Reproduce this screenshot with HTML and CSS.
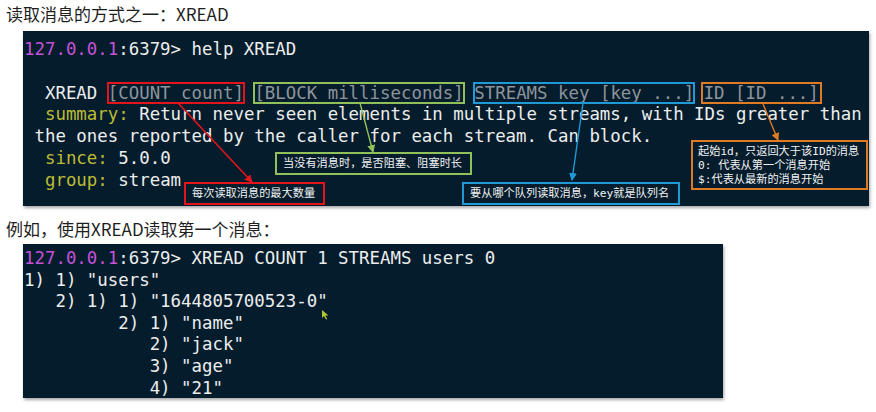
FILE: index.html
```html
<!DOCTYPE html>
<html>
<head>
<meta charset="utf-8">
<link rel="stylesheet" href="styles.css">
</head>
<body>
<h2 class="title">读取消息的方式之一：XREAD</h2>
<div class="term term-help">
  <div class="line"><span class="ip">127.0.0.1</span>:6379&gt; help XREAD</div>
  <div class="line"> </div>
  <div class="line">  XREAD <span class="arg box-red">[COUNT count]</span> <span class="arg box-green">[BLOCK milliseconds]</span> <span class="arg box-blue">STREAMS key [key ...]</span> <span class="arg box-orange">ID [ID ...]</span></div>
  <div class="line">  <span class="key">summary:</span> Return never seen elements in multiple streams, with IDs greater than</div>
  <div class="line"> the ones reported by the caller for each stream. Can block.</div>
  <div class="line">  <span class="key">since:</span> 5.0.0</div>
  <div class="line">  <span class="key">group:</span> stream</div>

  <svg class="arrows" width="846" height="175" viewBox="0 0 846 175">
    <defs>
      <marker id="hr" markerWidth="8" markerHeight="8" refX="7" refY="4" orient="auto" markerUnits="userSpaceOnUse"><path d="M0,0 L8,4 L0,8 z" fill="#e3141c"/></marker>
      <marker id="hg" markerWidth="8" markerHeight="8" refX="7" refY="4" orient="auto" markerUnits="userSpaceOnUse"><path d="M0,0 L8,4 L0,8 z" fill="#8fc05a"/></marker>
      <marker id="hb" markerWidth="8" markerHeight="8" refX="7" refY="4" orient="auto" markerUnits="userSpaceOnUse"><path d="M0,0 L8,4 L0,8 z" fill="#1f9ad6"/></marker>
      <marker id="ho" markerWidth="8" markerHeight="8" refX="7" refY="4" orient="auto" markerUnits="userSpaceOnUse"><path d="M0,0 L8,4 L0,8 z" fill="#e07b25"/></marker>
    </defs>
    <line x1="155" y1="72" x2="229" y2="151" stroke="#e3141c" stroke-width="1.6" marker-end="url(#hr)"/>
    <line x1="337" y1="72" x2="350" y2="121" stroke="#8fc05a" stroke-width="1.4" marker-end="url(#hg)"/>
    <line x1="560" y1="72" x2="549" y2="149" stroke="#1f9ad6" stroke-width="1.4" marker-end="url(#hb)"/>
    <line x1="740" y1="73" x2="755" y2="109" stroke="#e07b25" stroke-width="1.4" marker-end="url(#ho)"/>
  </svg>

  <div class="note note-red">每次读取消息的最大数量</div>
  <div class="note note-green">当没有消息时，是否阻塞、阻塞时长</div>
  <div class="note note-blue">要从哪个队列读取消息，key就是队列名</div>
  <div class="note note-orange">起始id，只返回大于该ID的消息<br>0: 代表从第一个消息开始<br>$:代表从最新的消息开始</div>
</div>

<h2 class="title title-2">例如，使用XREAD读取第一个消息：</h2>
<div class="term term-out">
  <div class="line"><span class="ip">127.0.0.1</span>:6379&gt; XREAD COUNT 1 STREAMS users 0</div>
  <div class="line">1) 1) "users"</div>
  <div class="line">   2) 1) 1) "1644805700523-0"</div>
  <div class="line">         2) 1) "name"</div>
  <div class="line">            2) "jack"</div>
  <div class="line">            3) "age"</div>
  <div class="line">            4) "21"</div>
  <svg class="pointer" width="8" height="10" viewBox="0 0 8 10"><path d="M0,0 L0,8 L2,6 L4,9.5 L5.2,9 L3.4,5.6 L6.5,5.6 z" fill="#b4c832"/></svg>
</div>
</body>
</html>
```

FILE: styles.css
```css
html, body {
  margin: 0;
  padding: 0;
  background: #ffffff;
}

body {
  width: 876px;
  height: 412px;
  overflow: hidden;
  font-family: "Noto Sans CJK SC", "Noto Sans", sans-serif;
}

.title {
  margin: 2px 0 0 6px;
  font-size: 17px;
  font-weight: 400;
  line-height: 24px;
  color: #1e1e1e;
}

.title-2 {
  margin-top: 11px;
}

.term {
  position: relative;
  box-sizing: border-box;
  margin-left: 23px;
  background: #051c2c;
  color: #eceeee;
  font-family: "DejaVu Sans Mono", "Liberation Mono", monospace;
  font-size: 17.4px;
  box-shadow: 1px 2px 3px rgba(0, 0, 0, 0.35);
}

.term .line {
  white-space: pre;
}

.term-help {
  margin-top: 5px;
  width: 846px;
  height: 175px;
  padding: 8px 0 0 1px;
  line-height: 21.8px;
}

.term-out {
  margin-top: 3px;
  width: 700px;
  height: 154px;
  padding: 4px 0 0 1px;
  line-height: 21.6px;
}

.ip {
  color: #c452d8;
}

.key {
  color: #bcbc34;
}

.arg {
  color: #8e949b;
  outline-offset: -1px;
}

.box-red { outline: 2px solid #e3141c; }
.box-green { outline: 2px solid #8fc05a; }
.box-blue { outline: 2px solid #1f9ad6; }
.box-orange { outline: 2px solid #e07b25; padding: 0 2px; margin-left: -3px; }

.arrows {
  position: absolute;
  left: 0;
  top: 0;
  pointer-events: none;
}

.note {
  position: absolute;
  box-sizing: border-box;
  background: #051c2c;
  color: #f2f2f2;
  font-family: "DejaVu Sans Mono", "Noto Sans CJK SC", monospace;
  font-size: 11.2px;
  line-height: 19px;
  white-space: nowrap;
  padding: 0 0 0 6px;
}

.note-red {
  left: 161px;
  top: 151px;
  width: 141px;
  height: 23px;
  border: 2px solid #e3141c;
}

.note-green {
  left: 252px;
  top: 121px;
  width: 197px;
  height: 23px;
  border: 2px solid #8fc05a;
}

.note-blue {
  left: 439px;
  top: 151px;
  width: 218px;
  height: 23px;
  border: 2px solid #1f9ad6;
}

.note-orange {
  left: 668px;
  top: 109px;
  width: 177px;
  height: 50px;
  border: 2px solid #e07b25;
  line-height: 14px;
  padding: 3px 0 0 5px;
}

.pointer {
  position: absolute;
  left: 299px;
  top: 66px;
}
```
